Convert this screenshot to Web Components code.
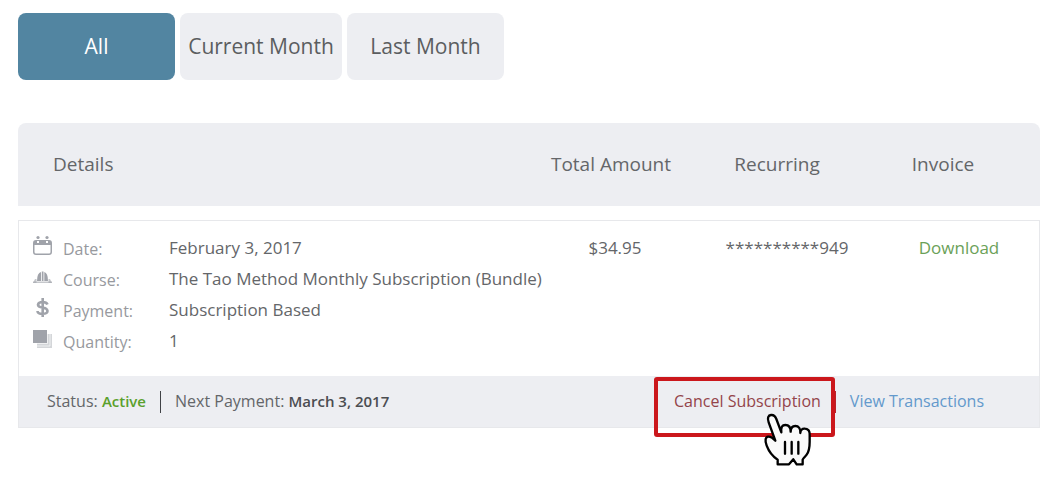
<!DOCTYPE html>
<html lang="en">
<head>
<meta charset="utf-8">
<meta name="viewport" content="width=device-width, initial-scale=1">
<title>Subscriptions</title>
<style>
  body { margin: 0; background: #fff; color: #646669; font: 17px/31px "Open Sans", "Noto Sans", sans-serif; }
</style>
</head>
<body>
<subscriptions-page></subscriptions-page>

<script>
const define = (name, html, setup) => {
  const template = document.createElement("template");
  template.innerHTML = html;
  customElements.define(name, class extends HTMLElement {
    constructor() {
      super();
      this.attachShadow({ mode: "open" }).append(template.content.cloneNode(true));
    }
    connectedCallback() { if (setup) setup(this); }
  });
};

const ICONS = {
  calendar: '<circle cx="5" cy="1.5" r="1.6"/><circle cx="14" cy="1.5" r="1.6"/><path fill-rule="evenodd" d="M3 4h13q3 0 3 3v9q0 3-3 3H3q-3 0-3-3V7q0-3 3-3zM1.500 9v7q0 1.500 1.500 1.500h13q1.500 0 1.500-1.500V9z"/><path fill="#fff" d="M4 5h2v2H4zM13 5h2v2h-2z"/>',
  course: '<path d="M0 16l2-4h1.500v4zM19 16l-2-4h-1.500v4z" opacity=".6"/><path d="M4 14Q4 6 8 5v9zM8.800 4.500h1.700V14H8.800zM11.300 5Q15 6 15 14h-3.700z"/><path d="M0 14.500h19V16H0z" opacity=".6"/>',
  payment: '<path fill="none" stroke="currentColor" stroke-width="2.600" d="M14.500 6.500Q13.500 4 9.500 4T5 6.700Q5 9 9.500 9.500T14.500 13q0 2.800-5 2.800T4.500 13M9.700 0v19"/>',
  quantity: '<path opacity=".45" d="M4 5h15v14H4z"/><path d="M0 1h14v13H0z"/><path fill="none" stroke="#fff" stroke-width=".8" opacity=".8" d="M14.500 3v11.500H2M17 5v12H4"/>'
};

define("line-icon", `
  <style>
    :host { display: block; width: 19px; height: 19px; color: #a0a3aa; }
    svg { display: block; width: 100%; height: 100%; fill: currentColor; overflow: visible; }
  </style>
  <svg viewBox="0 0 19 19" aria-hidden="true"></svg>`,
  el => { el.shadowRoot.querySelector("svg").innerHTML = ICONS[el.getAttribute("name")]; });

define("filter-button", `
  <style>
    :host { display: block; flex: 0 1 157px; }
    button { width: 100%; min-height: 67px; margin: 0; padding: 0; border: 0; border-radius: 8px;
      background: #edeef2; color: #5b5d60; font: inherit; font-size: 21px; white-space: nowrap; cursor: pointer; }
    :host([selected]) button { background: #5285a1; color: #fff; }
    :host([wide]) { flex-basis: 162px; }
  </style>
  <button type="button"><slot></slot></button>`,
  el => el.shadowRoot.querySelector("button").setAttribute("aria-pressed", el.hasAttribute("selected")));

define("filter-bar", `
  <style>:host { display: flex; gap: 5px; }</style>
  <slot></slot>`);

define("detail-row", `
  <style>
    :host { display: grid; grid-template-columns: 30px 106px auto; height: 31px; }
    .icon { padding-top: 4px; }
    .label { padding-top: 2px; font-size: 16px; color: #97999e; }
    .value { white-space: nowrap; }
  </style>
  <span class="icon"></span>
  <span class="label"><slot name="label"></slot></span>
  <span class="value"><slot></slot></span>`,
  el => {
    const icon = document.createElement("line-icon");
    icon.setAttribute("name", el.getAttribute("icon"));
    el.shadowRoot.querySelector(".icon").replaceChildren(icon);
  });

define("hand-pointer", `
  <style>
    :host { display: block; width: 48px; height: 53px; pointer-events: none; }
    svg { display: block; width: 100%; height: 100%; overflow: visible; }
  </style>
  <svg viewBox="72 126 144 159" aria-hidden="true" fill="#fafafa" stroke="#000" stroke-width="7" stroke-linejoin="round" stroke-linecap="round">
    <path d="M113 280V266C94 254 86 240 80 224C74 208 76 198 85 197C94 196 100 203 106 209L86 154C81 140 85 133 93 132C101 131 106 136 109 144L124 184C122 168 127 162 136 162C146 162 152 169 152 182C152 170 157 165 166 165C176 165 182 173 181 186C181 177 187 172 195 173C205 174 210 181 209 193V212C209 230 206 243 200 251C196 257 190 261 188 266V280H170L160 265L147 280Z"/>
    <path fill="none" d="M135 213V248M155 213V248M175 213V248"/>
  </svg>`);

define("callout-box", `
  <style>
    :host { display: inline-block; position: relative; }
    .frame { position: absolute; inset: -9px -14px -20px -20px; border: 4px solid #cb171c; border-radius: 3px; pointer-events: none; }
    hand-pointer { position: absolute; top: 27px; right: 9px; z-index: 1; }
  </style>
  <slot></slot><span class="frame"></span><hand-pointer></hand-pointer>`);

define("subscription-footer", `
  <style>
    :host { display: flex; align-items: center; gap: 14px; min-height: 51px; padding: 0 55px 0 28px; background: #edeef2; font-size: 16px; white-space: nowrap; }
    .rule { width: 1px; height: 22px; background: #404246; }
    .actions { display: flex; align-items: center; gap: 14px; margin-left: auto; }
    .actions .rule { background: #b9222a; }
    strong { font-size: 15px; font-weight: 600; color: #4b4d51; }
    .active { color: #5aa02c; }
    a { text-decoration: none; color: #6399cc; }
    .cancel { color: #94444a; }
  </style>
  <span>Status: <strong class="active">Active</strong></span>
  <span class="rule"></span>
  <span>Next Payment: <strong>March 3, 2017</strong></span>
  <div class="actions">
    <callout-box><a class="cancel" href="#cancel">Cancel Subscription</a></callout-box>
    <span class="rule"></span>
    <a href="#transactions">View Transactions</a>
  </div>`);

define("subscription-table", `
  <style>
    :host { display: block; }
    table, thead, tbody { display: block; }
    tr { display: grid; }
    th, td { padding: 0; text-align: center; font-weight: 400; }
    th:first-child, td:first-child { text-align: left; }
    thead tr { grid-template-columns: 1fr 166px 166px 166px; align-items: center; min-height: 83px; padding: 0 14px 0 35px;
      border-radius: 8px 8px 0 0; background: #edeef2; font-size: 19px; }
    tbody { margin-top: 14px; border: 1px solid #e7e8eb; }
    .record { grid-template-columns: 1fr 136px 208px 136px; padding: 11px 12px 20px 14px; }
    a { color: #6ba158; text-decoration: none; }
  </style>
  <table>
    <thead>
      <tr><th scope="col">Details</th><th scope="col">Total Amount</th><th scope="col">Recurring</th><th scope="col">Invoice</th></tr>
    </thead>
    <tbody>
      <tr class="record">
        <td>
          <detail-row icon="calendar"><span slot="label">Date:</span>February 3, 2017</detail-row>
          <detail-row icon="course"><span slot="label">Course:</span>The Tao Method Monthly Subscription (Bundle)</detail-row>
          <detail-row icon="payment"><span slot="label">Payment:</span>Subscription Based</detail-row>
          <detail-row icon="quantity"><span slot="label">Quantity:</span>1</detail-row>
        </td>
        <td>$34.95</td>
        <td>**********949</td>
        <td><a href="#download">Download</a></td>
      </tr>
      <tr><td colspan="4"><subscription-footer></subscription-footer></td></tr>
    </tbody>
  </table>`);

define("subscriptions-page", `
  <style>
    :host { display: block; padding: 13px 16px 40px 18px; }
    subscription-table { margin-top: 43px; }
  </style>
  <filter-bar>
    <filter-button selected>All</filter-button>
    <filter-button wide>Current Month</filter-button>
    <filter-button>Last Month</filter-button>
  </filter-bar>
  <subscription-table></subscription-table>`);
</script>
</body>
</html>
